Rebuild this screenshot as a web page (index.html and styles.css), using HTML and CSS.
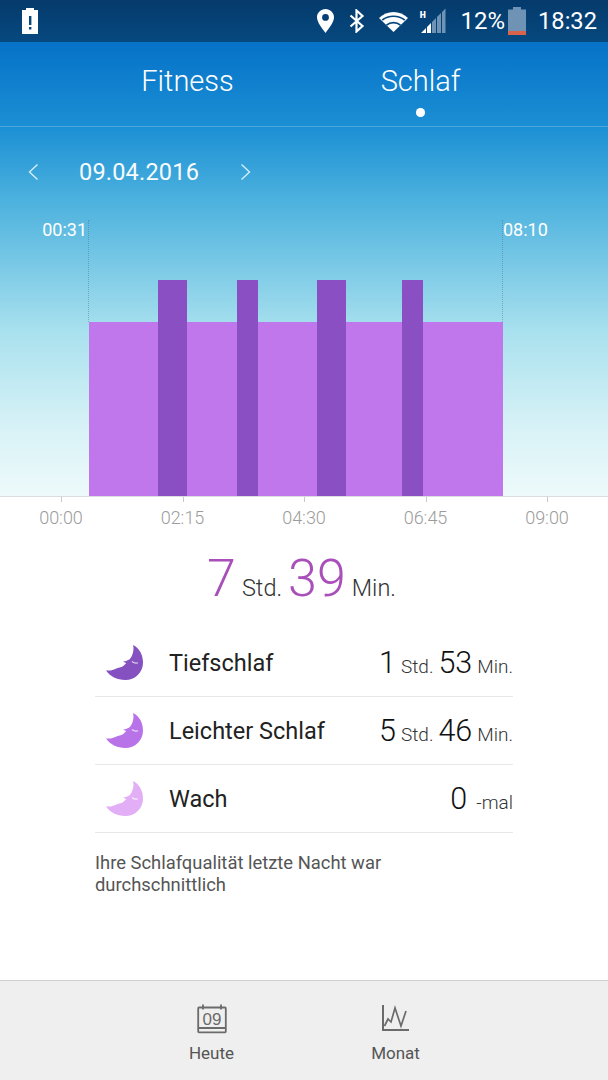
FILE: index.html
```html
<!DOCTYPE html>
<html lang="de">
<head>
<meta charset="utf-8">
<title>Schlaf</title>
<link rel="stylesheet" href="styles.css">
</head>
<body>
<svg class="defs" width="0" height="0" aria-hidden="true">
  <symbol id="moon" viewBox="0 0 38 36">
    <path class="moon-body" d="M27 0C33.500 3 37 10 37 17.700C37 27.500 29 35 19.300 35C11 35 4 31.500 0 25.300C4 26 7 25.200 9.300 24C12.500 22.500 15 22.500 17.300 21L20.300 18L17 16.700C19.500 16.500 22 15.500 23.600 14.300C26.500 11 28.500 5 27 0Z"/>
    <path d="M26 16.500Q29 19 32 17.800" fill="none" stroke="#fff" stroke-opacity=".75" stroke-width="1.200"/>
  </symbol>
</svg>
<div class="screen">
  <div class="status">
    <svg class="st-alert" width="18" height="26" viewBox="0 0 18 26"><path fill="#fff" d="M5 0h8v2h4v24H1V2h4z"/><path fill="#06467f" d="M8 8h2.400v9H8zM8 19h2.400v2.600H8z"/></svg>
    <div class="status-right">
      <svg class="st-pin" width="17" height="24" viewBox="0 0 17 24"><path fill="#fff" fill-rule="evenodd" d="M8.500 0C13.200 0 17 3.700 17 8.300C17 13.500 11.500 20 8.500 24C5.500 20 0 13.500 0 8.300C0 3.700 3.800 0 8.500 0ZM8.500 5A3.400 3.400 0 1 0 8.500 11.800A3.400 3.400 0 1 0 8.500 5Z"/></svg>
      <svg class="st-bt" width="16" height="24" viewBox="0 0 16 24"><path fill="none" stroke="#fff" stroke-width="2.200" d="M1.500 6.500L13.500 17L7.500 22.500V1.500L13.500 7L1.500 17.500"/></svg>
      <svg class="st-wifi" width="29" height="21" viewBox="0 0 29 21"><path fill="#fff" d="M14.500 21L0 7C8-1 21-1 29 7Z"/><path fill="none" stroke="#06467f" stroke-width="1.700" d="M3.300 9C9.500 4 19.500 4 25.700 9M7.500 14.200C11.500 10.800 17.500 10.800 21.500 14.200"/></svg>
      <div class="st-signal">
        <span class="st-h">H</span>
        <svg width="25" height="34" viewBox="0 0 25 34"><path fill="#fff" d="M0 33L5 28V33ZM6 27L10 23V33H6Z"/><path fill="#6f93b5" d="M11 22L15 18V33H11ZM16 17L20 13V33H16ZM21 12L24.500 8.500V33H21Z"/></svg>
      </div>
      <span class="st-text st-pct">12%</span>
      <svg class="st-batt" width="18" height="28" viewBox="0 0 18 28"><path fill="#6f93b5" d="M5 0h8v2.500h5V24H0V2.500h5z"/><path fill="#d9634a" d="M0 24h18v4H0z"/></svg>
      <span class="st-text st-time">18:32</span>
    </div>
  </div>

  <div class="hero">
    <nav class="tabs">
      <div class="tab tab-fitness">Fitness</div>
      <div class="tab tab-sleep">Schlaf<span class="tab-dot"></span></div>
    </nav>
    <div class="date-row">
      <svg class="chev" width="11" height="18" viewBox="0 0 11 18"><path d="M9.500 1.500L1.500 9L9.500 16.500"/></svg>
      <span class="date">09.04.2016</span>
      <svg class="chev chev-next" width="11" height="18" viewBox="0 0 11 18"><path d="M1.500 1.500L9.500 9L1.500 16.500"/></svg>
    </div>
    <div class="chart">
      <span class="edge edge-start" style="left:88px"></span>
      <span class="edge edge-end" style="left:502px"></span>
      <span class="edge-label label-start">00:31</span>
      <span class="edge-label label-end">08:10</span>
      <span class="bar light" style="left:89px;width:414px"></span>
      <span class="bar deep" style="left:158px;width:29px"></span>
      <span class="bar deep" style="left:237px;width:21px"></span>
      <span class="bar deep" style="left:317px;width:29px"></span>
      <span class="bar deep" style="left:402px;width:21px"></span>
    </div>
  </div>

  <div class="axis">
    <div class="tick">00:00</div>
    <div class="tick">02:15</div>
    <div class="tick">04:30</div>
    <div class="tick">06:45</div>
    <div class="tick">09:00</div>
  </div>

  <div class="total">
    <span class="total-num">7</span><span class="total-unit">Std.</span><span class="total-num">39</span><span class="total-unit">Min.</span>
  </div>

  <section class="details">
    <div class="row">
      <svg class="moon moon-deep" width="38" height="36"><use href="#moon"/></svg>
      <span class="row-label">Tiefschlaf</span>
      <span class="row-value"><b>1</b><i>Std.</i><b>53</b><i>Min.</i></span>
    </div>
    <div class="row">
      <svg class="moon moon-light" width="38" height="36"><use href="#moon"/></svg>
      <span class="row-label">Leichter Schlaf</span>
      <span class="row-value"><b>5</b><i>Std.</i><b>46</b><i>Min.</i></span>
    </div>
    <div class="row">
      <svg class="moon moon-awake" width="38" height="36"><use href="#moon"/></svg>
      <span class="row-label">Wach</span>
      <span class="row-value"><b>0</b><i class="times">-mal</i></span>
    </div>
    <p class="note">Ihre Schlafqualität letzte Nacht war durchschnittlich</p>
  </section>

  <footer class="bottom">
    <div class="bottom-item">
      <svg width="30" height="30" viewBox="0 0 30 30"><g fill="none" stroke="#6b6b6b"><path stroke-width="1.800" d="M2 3.500H28C28.500 3.500 28.800 3.800 28.800 4.300V27.500C28.800 28 28.500 28.300 28 28.300H2C1.500 28.300 1.200 28 1.200 27.500V4.300C1.200 3.800 1.500 3.500 2 3.500Z"/><path stroke-width="2" d="M1.500 24H28.500"/><path stroke-width="1.800" d="M6 .5V5.500M24 .5V5.500"/></g><text class="cal-num" x="15" y="20.500" text-anchor="middle">09</text></svg>
      <span>Heute</span>
    </div>
    <div class="bottom-item">
      <svg width="30" height="30" viewBox="0 0 30 30"><path fill="none" stroke="#6b6b6b" stroke-width="2" d="M2 1V26H28"/><path fill="none" stroke="#6b6b6b" stroke-width="1.700" d="M3.500 22L7 15L10 18L14 4L20 22L25 7"/></svg>
      <span>Monat</span>
    </div>
  </footer>
</div>
</body>
</html>
```

FILE: styles.css
```css
* { box-sizing: border-box; }
html, body { margin: 0; padding: 0; }
body { background: #fff; font-family: Roboto, "Noto Sans", sans-serif; }
.defs { position: absolute; }
.screen { width: 608px; height: 1080px; display: flex; flex-direction: column; overflow: hidden; }

.status { height: 42px; flex: none; display: flex; align-items: center; justify-content: space-between; padding: 0 11px 0 21px; background: linear-gradient(#053a6c, #06497f); color: #fff; }
.status-right { display: flex; align-items: center; }
.st-pin { margin-top: -1px; }
.st-bt { margin-left: 15px; }
.st-wifi { margin-left: 14px; margin-top: 1px; }
.st-signal { position: relative; width: 25px; height: 34px; margin-left: 13px; margin-top: -9px; }
.st-signal svg { display: block; }
.st-h { position: absolute; left: -2px; top: 10px; font: 700 11px/11px "Liberation Mono", monospace; }
.st-text { font-size: 24px; font-weight: 400; line-height: 42px; }
.st-pct { margin-left: 14px; }
.st-batt { margin-left: 3px; }
.st-time { margin-left: 12px; font-size: 23.700px; }

.hero { height: 454px; flex: none; display: flex; flex-direction: column; background: linear-gradient(#0672c8 0, #1b8fd4 84px, #4db2de 160px, #a9e1ee 290px, #d5f1f6 380px, #eefafb 454px); }
.tabs { height: 85px; flex: none; display: flex; border-bottom: 1px solid rgba(255,255,255,.22); }
.tab { position: relative; color: #fff; font-size: 29px; font-weight: 300; line-height: 78px; text-align: center; width: 233px; }
.tab-fitness { margin-left: 71px; }
.tab-dot { position: absolute; left: 112px; top: 66px; width: 8.500px; height: 8.500px; border-radius: 50%; background: #fff; }

.date-row { height: 90px; flex: none; display: flex; align-items: center; padding: 0 0 0 28px; color: #fff; }
.date { font-size: 23.500px; font-weight: 400; margin-left: 40px; letter-spacing: .2px; opacity: .97; }
.chev { fill: none; stroke: #d3eef8; stroke-width: 1.400; }
.chev-next { margin-left: 41px; }

.chart { position: relative; flex: 1; }
.bar { position: absolute; bottom: 0; }
.bar.light { height: 174px; background: #c177ec; }
.bar.deep { height: 216px; background: #8a4fc3; }
.edge { position: absolute; top: 3px; height: 102px; border-left: 1px dotted rgba(70,110,130,.45); }
.edge-label { position: absolute; top: 2px; font-size: 18px; line-height: 22px; color: #fff; }
.label-start { right: 521px; }
.label-end { left: 503px; }

.axis { height: 54px; flex: none; display: flex; border-top: 1px solid #d9dde0; justify-content: center; }
.tick { position: relative; width: 121.500px; text-align: center; color: #9c9c9c; font-size: 18px; font-weight: 300; padding-top: 11px; line-height: 20px; }
.tick::before { content: ""; position: absolute; left: 50%; top: 0; height: 5px; border-left: 1px solid #c9c9c9; }

.total { height: 79px; flex: none; display: flex; justify-content: center; align-items: baseline; padding-right: 5px; margin-top: -3px; }
.total-num { font-size: 52px; font-weight: 300; line-height: 64px; color: #a94fb9; }
.total-unit { font-size: 23.500px; font-weight: 300; color: #333; margin: 0 6px; }
.total-unit:last-child { margin-right: 0; }

.details { padding: 3px 95px 0; flex: 1; }
.row { height: 68px; display: flex; align-items: center; border-bottom: 1px solid #e8e8e8; padding-left: 11px; }
.moon { flex: none; }
.moon-body { fill: currentColor; }
.moon-deep { color: #8550c0; }
.moon-light { color: #b873e8; }
.moon-awake { color: #e2aef5; }
.row-label { margin-left: 25px; font-size: 23.500px; color: #222; flex: 1; }
.row-value { display: flex; align-items: baseline; }
.row-value b { font-size: 30.500px; font-weight: 300; color: #111; }
.row-value i { font-size: 19px; font-style: normal; font-weight: 300; color: #333; margin: 0 5px; }
.row-value i:last-child { margin-right: 0; }
.row-value .times { margin-left: 9px; }
.note { margin: 19px 0 0; font-size: 18.400px; line-height: 22px; color: #555; font-weight: 400; max-width: 300px; }

.bottom { height: 100px; flex: none; display: flex; justify-content: center; gap: 124px; padding-top: 23px; margin-left: -1px; background: #efefef; border-top: 1px solid #cfcfcf; }
.bottom-item { width: 60px; display: flex; flex-direction: column; align-items: center; color: #555; font-size: 17px; }
.bottom-item svg { display: block; margin-bottom: 9px; }
.bottom-item span { line-height: 20px; }
.cal-num { font-family: "Liberation Sans", sans-serif; font-size: 17px; fill: #6b6b6b; }
```
